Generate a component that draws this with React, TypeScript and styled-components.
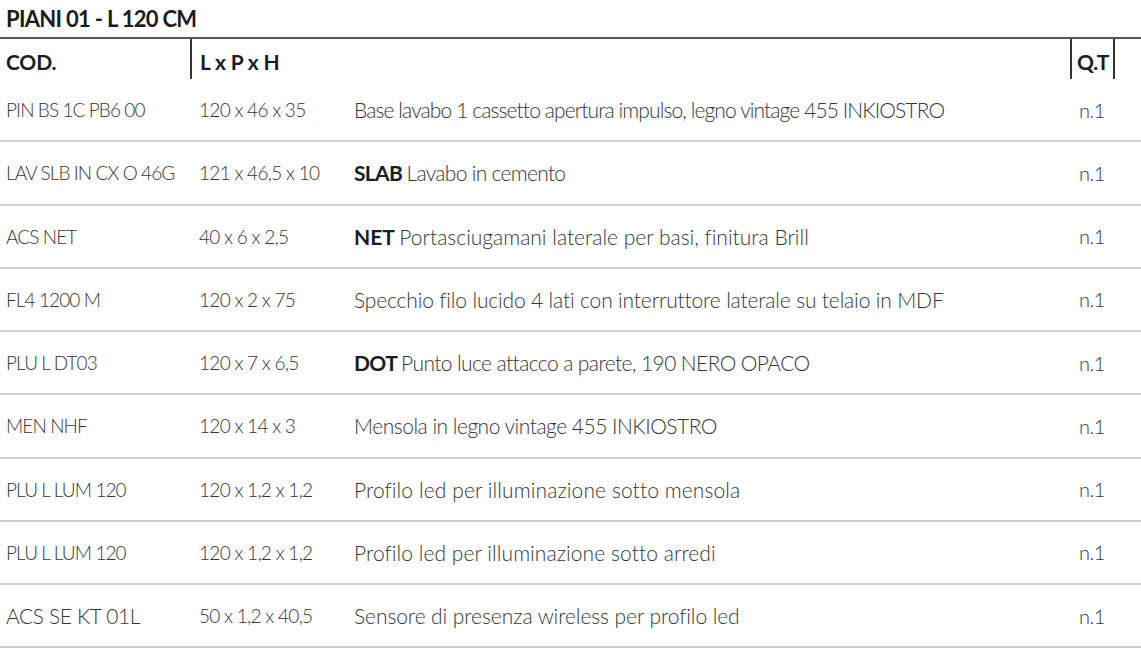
import React from "react";
import styled, { createGlobalStyle } from "styled-components";

type Item = {
  code: string;
  size: string;
  name?: string;
  desc: string;
  track: number;
  big?: boolean;
};

// track = letter-spacing of the description, the source sheet sets some rows tighter
const items: Item[] = [
  { code: "PIN BS 1C PB6 00", size: "120 x 46 x 35", desc: "Base lavabo 1 cassetto apertura impulso, legno vintage 455 INKIOSTRO", track: -0.9 },
  { code: "LAV SLB IN CX O 46G", size: "121 x 46,5 x 10", name: "SLAB", desc: "Lavabo in cemento", track: -0.7 },
  { code: "ACS NET", size: "40 x 6 x 2,5", name: "NET", desc: "Portasciugamani laterale per basi, finitura Brill", track: 0 },
  { code: "FL4 1200 M", size: "120 x 2 x 75", desc: "Specchio filo lucido 4 lati con interruttore laterale su telaio in MDF", track: -0.16 },
  { code: "PLU L DT03", size: "120 x 7 x 6,5", name: "DOT", desc: "Punto luce attacco a parete, 190 NERO OPACO", track: -0.6 },
  { code: "MEN NHF", size: "120 x 14 x 3", desc: "Mensola in legno vintage 455 INKIOSTRO", track: -0.5 },
  { code: "PLU L LUM 120", size: "120 x 1,2 x 1,2", desc: "Profilo led per illuminazione sotto mensola", track: 0.1 },
  { code: "PLU L LUM 120", size: "120 x 1,2 x 1,2", desc: "Profilo led per illuminazione sotto arredi", track: 0.07 },
  { code: "ACS SE KT 01L", size: "50 x 1,2 x 40,5", desc: "Sensore di presenza wireless per profilo led", track: -0.08, big: true },
];

const GlobalStyle = createGlobalStyle`
  body {
    margin: 0;
    background: #ffffff;
    font-family: "Lato", "Noto Sans", sans-serif;
    font-variant-ligatures: none;
  }
`;

const Page = styled.div`
  width: 1141px;
  background: #fff;
`;

const Title = styled.h2`
  margin: 0;
  height: 37px;
  display: flex;
  align-items: center;
  padding-left: 6px;
  font-size: 22px;
  font-weight: 700;
  letter-spacing: -0.7px;
  color: #1c1c1c;
  border-bottom: 2px solid #555;
`;

const Row = styled.div<{ $head?: boolean }>`
  display: grid;
  grid-template-columns: 190px 155px 725px 45px 26px;
  height: ${(p) => (p.$head ? "40px" : "61.25px")};
  border-bottom: ${(p) => (p.$head ? "none" : "2px solid #cfcfcf")};
`;

const Cell = styled.div<{ $pad?: number; $sep?: boolean; $sepRight?: boolean; $top?: number }>`
  display: flex;
  align-items: center;
  padding-left: ${(p) => p.$pad ?? 9}px;
  padding-top: ${(p) => p.$top ?? 0}px;
  border-left: ${(p) => (p.$sep ? "2px solid #333" : "none")};
  border-right: ${(p) => (p.$sepRight ? "2px solid #333" : "none")};
  white-space: nowrap;
`;

const HeadText = styled.span`
  font-size: 21px;
  font-weight: 700;
  letter-spacing: -0.2px;
  color: #1c1c1c;
`;

const BodyText = styled.span<{ $big?: boolean; $size?: number; $track?: number }>`
  font-size: ${(p) => (p.$big ? 21 : p.$size ?? 19)}px;
  font-weight: 300;
  letter-spacing: ${(p) => p.$track ?? -0.4}px;
  color: #363636;

  b {
    font-weight: 700;
    color: #1c1c1c;
  }
`;

export default function App() {
  return (
    <>
      <GlobalStyle />
      <Page>
        <Title>PIANI 01 - L 120 CM</Title>
        <Row $head>
          <Cell $pad={6} $top={4}>
            <HeadText>COD.</HeadText>
          </Cell>
          <Cell $sep $pad={8} $top={4}>
            <HeadText>L x P x H</HeadText>
          </Cell>
          <Cell />
          <Cell $sep $sepRight $pad={5} $top={4}>
            <HeadText>Q.T</HeadText>
          </Cell>
          <Cell />
        </Row>
        {items.map((it, i) => (
          <Row key={i}>
            <Cell $pad={6}>
              <BodyText $big={it.big} $track={it.big ? -0.4 : -0.9}>
                {it.code}
              </BodyText>
            </Cell>
            <Cell>
              <BodyText $track={-0.7}>{it.size}</BodyText>
            </Cell>
            <Cell>
              <BodyText $size={21} $track={it.track}>
                {it.name && <b>{it.name} </b>}
                {it.desc}
              </BodyText>
            </Cell>
            <Cell $pad={9}>
              <BodyText $size={20}>n.1</BodyText>
            </Cell>
            <Cell />
          </Row>
        ))}
      </Page>
    </>
  );
}
